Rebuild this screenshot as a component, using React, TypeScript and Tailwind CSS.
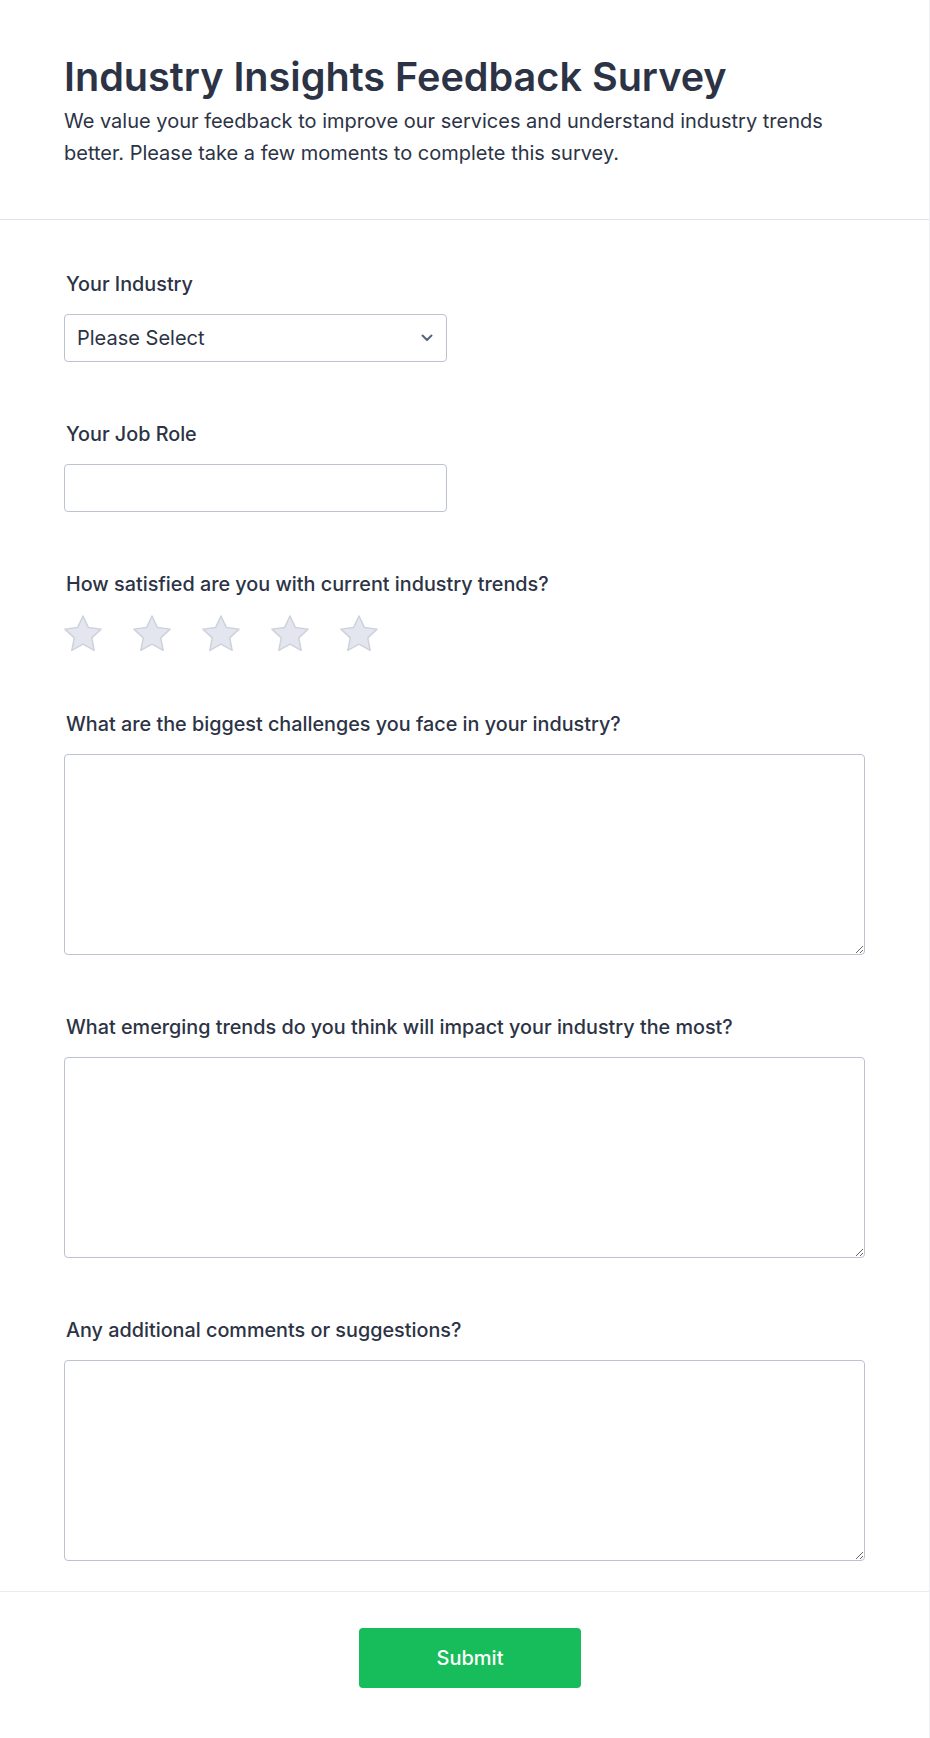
import React from 'react';

const inputBox =
  'block border border-[#bcc2d0] rounded-[4px] bg-white text-[20px] text-[#2c3345] outline-none focus:border-[#4c8bf5]';

const Star: React.FC = () => (
  <svg width="40" height="38" viewBox="0 0 40 38" className="block shrink-0">
    <polygon
      points="20,2 25.41,13.56 38.07,15.13 28.75,23.84 31.17,36.37 20,30.2 8.83,36.37 11.25,23.84 1.93,15.13 14.59,13.56"
      fill="#e3e6ee"
      stroke="#cdd2dc"
      strokeWidth="1.5"
      strokeLinejoin="round"
    />
  </svg>
);

const Label: React.FC<{ children: React.ReactNode }> = ({ children }) => (
  <label className="block pl-[2px] mb-[18px] text-[19.8px] leading-6 font-medium text-[#2c3345]">
    {children}
  </label>
);

const TextQuestion: React.FC<{ label: string }> = ({ label }) => (
  <div>
    <Label>{label}</Label>
    <textarea className={`${inputBox} w-full h-[201px] px-[12px] py-[10px]`} />
  </div>
);

export default function App() {
  const [rating, setRating] = React.useState(0);

  return (
    <div className="min-h-screen bg-white border-r border-[#eef0f4] font-['Inter','Noto_Sans',sans-serif] text-[#2c3345]">
      {/* Header */}
      <div className="px-16 pt-[53px] pb-[50px] border-b border-[#dfe3ed]">
        <h1 className="text-[39.6px] leading-[48px] font-semibold">Industry Insights Feedback Survey</h1>
        <p className="mt-[4px] text-[20px] leading-8">
          We value your feedback to improve our services and understand industry trends better. Please take a few
          moments to complete this survey.
        </p>
      </div>

      {/* Questions */}
      <form className="px-16 pt-[52px] pb-[30px] flex flex-col gap-[60px]" onSubmit={(e) => e.preventDefault()}>
        <div>
          <Label>Your Industry</Label>
          <div className="relative w-[383px]">
            <select className={`${inputBox} w-full h-[48px] pl-[12px] pr-10 appearance-none`} defaultValue="">
              <option value="">Please Select</option>
              <option>Technology</option>
              <option>Healthcare</option>
              <option>Finance</option>
              <option>Manufacturing</option>
              <option>Retail</option>
              <option>Other</option>
            </select>
            <svg
              className="absolute right-[14px] top-[20px] pointer-events-none"
              width="12"
              height="8"
              viewBox="0 0 12 8"
              fill="none"
            >
              <path d="M1.5 1.5 6 6l4.5-4.5" stroke="#57647e" strokeWidth="2" strokeLinecap="round" strokeLinejoin="round" />
            </svg>
          </div>
        </div>

        <div>
          <Label>Your Job Role</Label>
          <input type="text" className={`${inputBox} w-[383px] h-[48px] px-[12px]`} />
        </div>

        <div>
          <Label>How satisfied are you with current industry trends?</Label>
          <div className="flex gap-[29px] -ml-[1px]">
            {[1, 2, 3, 4, 5].map((n) => (
              <button
                key={n}
                type="button"
                onClick={() => setRating(n)}
                className="block"
                aria-label={`${n} star`}
              >
                <Star />
              </button>
            ))}
          </div>
        </div>

        <TextQuestion label="What are the biggest challenges you face in your industry?" />
        <TextQuestion label="What emerging trends do you think will impact your industry the most?" />
        <TextQuestion label="Any additional comments or suggestions?" />
      </form>

      {/* Footer */}
      <div className="border-t border-[#e8ebf1] pt-[36px] pb-[50px] pl-[11px] flex justify-center">
        <button
          type="button"
          className="w-[222px] h-[60px] rounded-[4px] bg-[#18bd5b] text-white text-[20px] font-medium"
        >
          Submit
        </button>
      </div>
    </div>
  );
}
